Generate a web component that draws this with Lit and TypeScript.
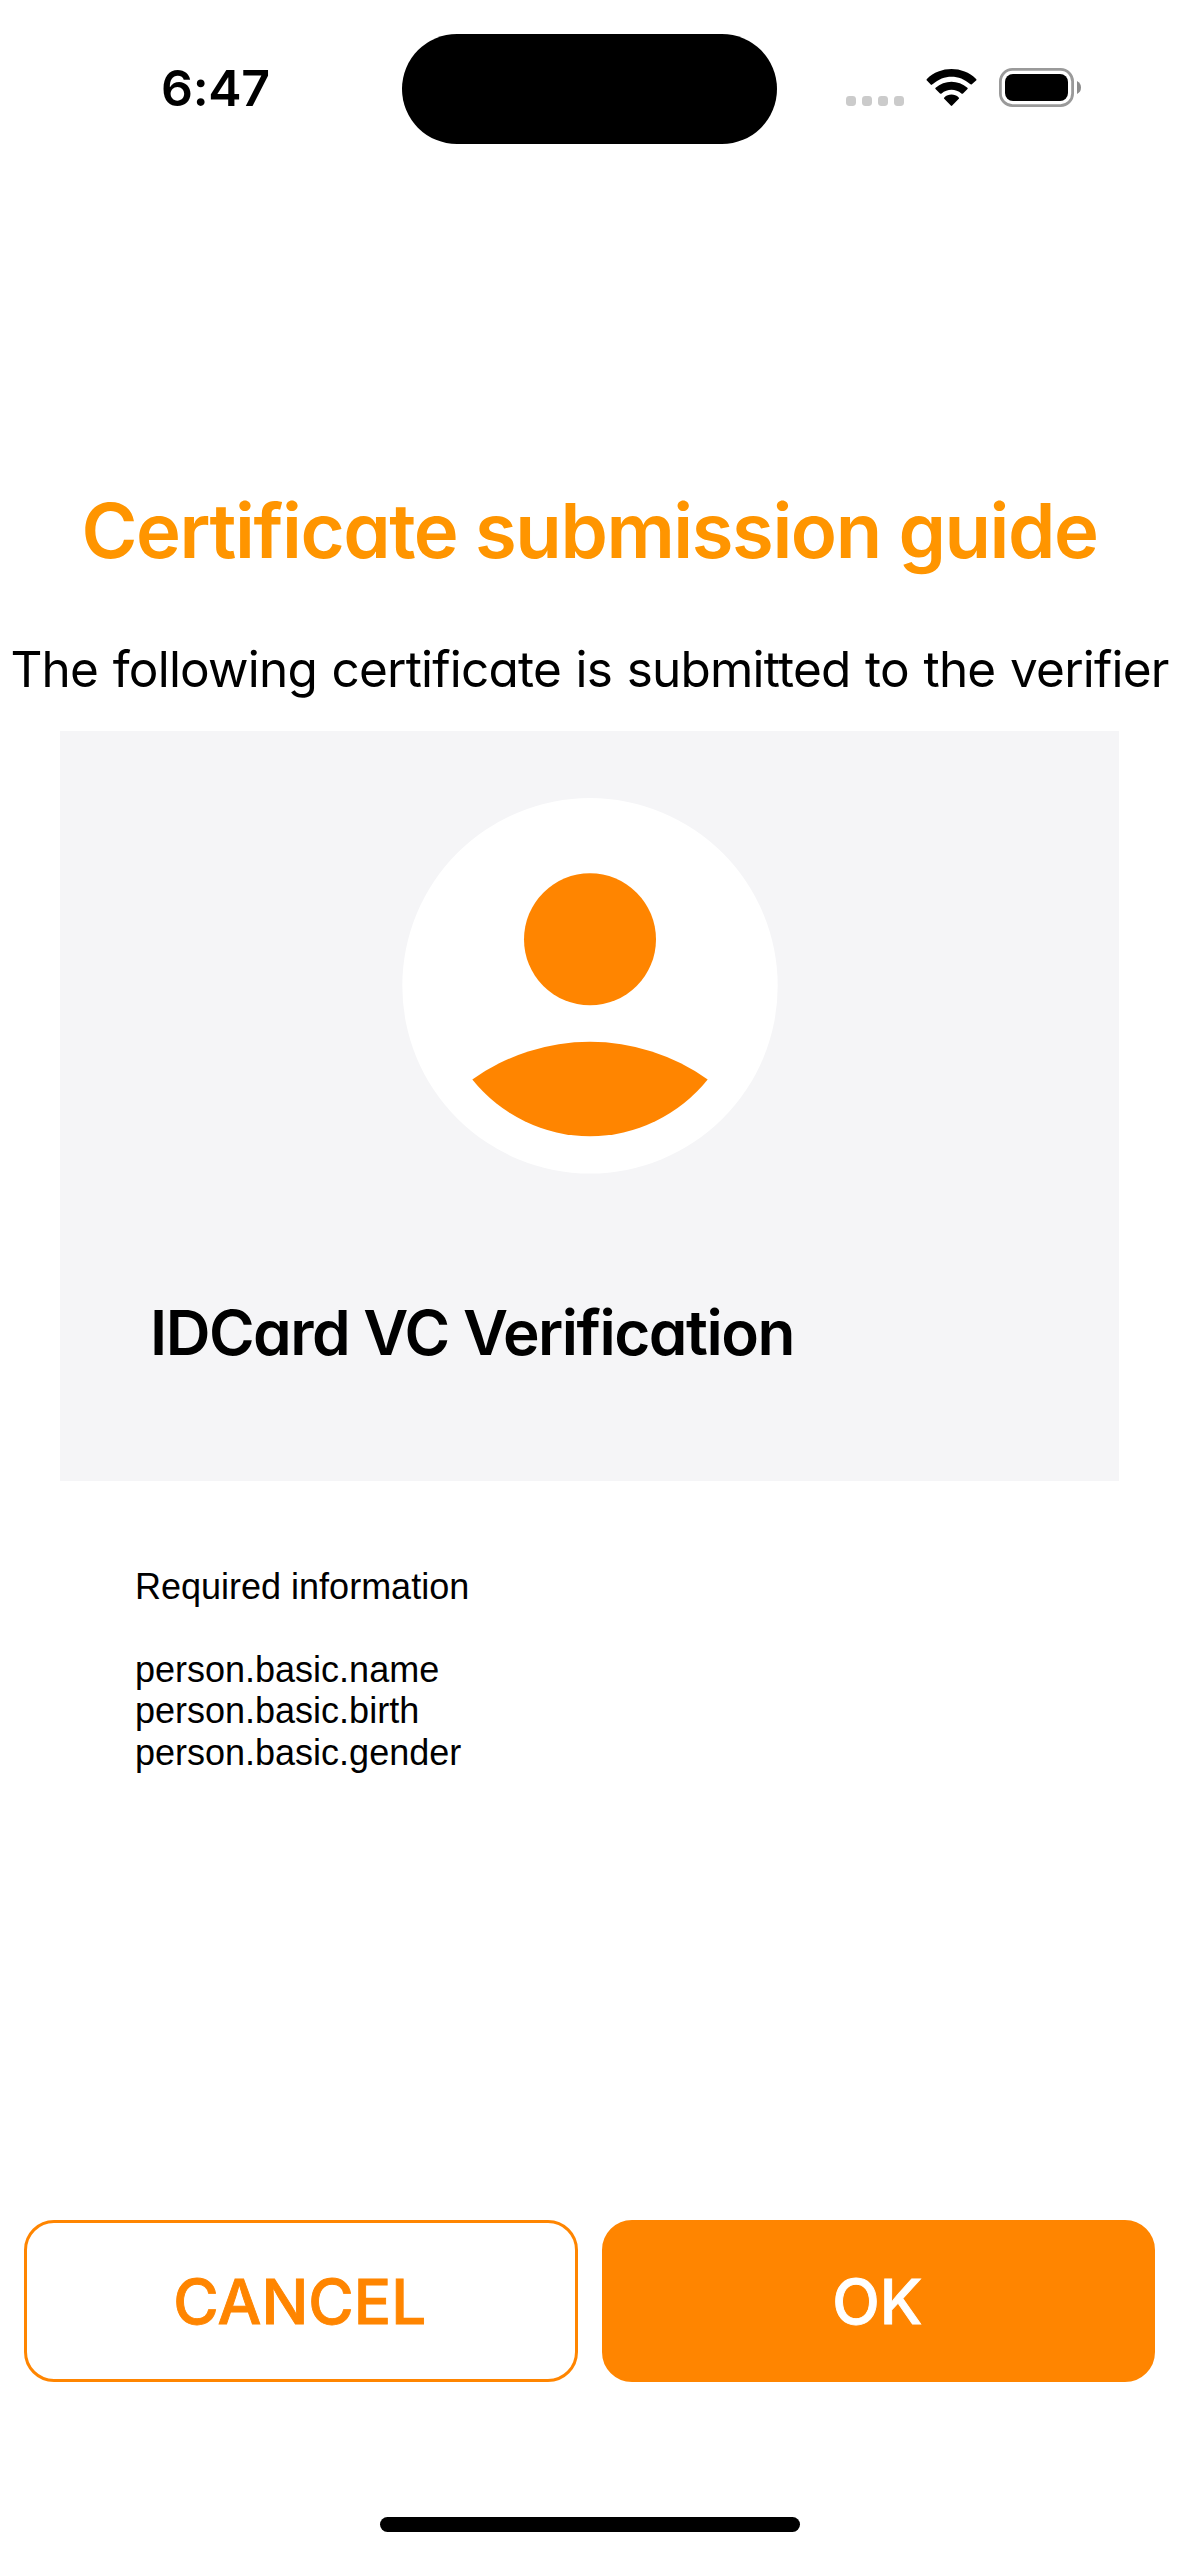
import { LitElement, html, svg, css } from "lit";
import { customElement, property } from "lit/decorators.js";

@customElement("status-bar")
class StatusBar extends LitElement {
  static styles = css`
    :host { display: block; }
    .bar { display: grid; grid-template-columns: 402px 375px 1fr; height: 110px; padding-top: 34px; }
    .time { padding: 24px 0 0 161px; font: 600 50px/60px Inter, sans-serif; letter-spacing: -0.3px; color: #000; }
    .island { background: #000; border-radius: 55px; }
    .icons { padding-left: 69px; padding-top: 34px; }
    svg { display: block; }
  `;
  render() {
    return html`<div class="bar">
      <div class="time">6:47</div>
      <div class="island"></div>
      <div class="icons">
        <svg width="236" height="40" viewBox="846 68 236 40">
          <g fill="#cbcbcb">
            ${[846, 862, 878, 894].map((x) => svg`<rect x=${x} y="96" width="10" height="10" rx="3.4"/>`)}
          </g>
          <path d="M931.2 84.9L926.9 80.6Q926.1 79.7 926.9 78.9C940.4 65.8 962.6 65.8 976.1 78.9Q976.9 79.7 976.1 80.6L971.8 84.2Q971 84.9 970.1 84.1C959.5 74.2 943.5 74.2 932.9 84.1Q932 84.9 931.2 84.9Z"/>
          <path d="M940 93.6L935.5 89.1Q934.9 88.4 935.6 87.7C944.5 79.6 958.5 79.6 967.4 87.7Q968.1 88.4 967.5 89.1L963 93.4Q962.2 94 961.4 93.4C955.7 88.5 947.3 88.5 941.6 93.4Q940.8 94 940 93.6Z"/>
          <path d="M950.8 105.6L944.2 98.8Q943.5 98.1 944.3 97.4C948.4 93.6 954.6 93.6 958.7 97.4Q959.5 98.1 958.8 98.8L952.2 105.6Q951.5 106.2 950.8 105.6Z"/>
          <rect x="1000.4" y="69.4" width="72.2" height="36.2" rx="12" fill="none" stroke="#9a9a9a" stroke-width="2.8"/>
          <rect x="1005" y="74" width="63" height="27" rx="8"/>
          <path d="M1077 81Q1081 83 1081 87.5Q1081 92 1077 94Z" fill="#8c8c8c"/>
        </svg>
      </div>
    </div>`;
  }
}

@customElement("certificate-card")
class CertificateCard extends LitElement {
  @property() name = "";
  static styles = css`
    :host { display: block; }
    .card { box-sizing: border-box; height: 750px; margin: 0 60px; padding-top: 67px; background: #f5f5f7; display: flex; flex-direction: column; }
    svg { display: block; align-self: center; }
    .name { padding: 123px 0 0 90px; font: 600 62px/72px Inter, sans-serif; font-feature-settings: "cv11"; letter-spacing: -1.5px; color: #000; white-space: nowrap; }
  `;
  render() {
    return html`<div class="card">
      <svg width="376" height="376" viewBox="0 0 376 376">
        <circle cx="188" cy="187.8" r="187.7" fill="#fff"/>
        <circle cx="188" cy="141.3" r="66" fill="#ff8500"/>
        <path d="M70.3 281.5A202.6 202.6 0 0 1 305.7 281.5A150.5 150.5 0 0 1 70.3 281.5Z" fill="#ff8500"/>
      </svg>
      <div class="name">${this.name}</div>
    </div>`;
  }
}

@customElement("app-root")
class AppRoot extends LitElement {
  static styles = css`
    :host { display: block; }
    .screen { display: flex; flex-direction: column; height: 2556px; width: 1179px; background: #fff; overflow: hidden; color: #000; }
    h1 { margin: 340px 0 0; text-align: center; white-space: nowrap; font: 600 76px/92px Inter, sans-serif; font-feature-settings: "cv11"; letter-spacing: -1.45px; color: #ff9500; }
    .lead { margin: 63px 0 0; height: 60px; display: flex; justify-content: center; white-space: nowrap; font: 400 49.5px/60px Inter, sans-serif; font-feature-settings: "cv11"; letter-spacing: -0.8px; word-spacing: 1.5px; }
    certificate-card { margin-top: 32px; }
    .info { margin: 85px 0 0 135px; font: 36px/41.4px "Liberation Sans", Arial, sans-serif; }
    .info p { margin: 0 0 41.4px; }
    .info ul { margin: 0; padding: 0; list-style: none; }
    .actions { margin-top: auto; padding: 0 24px; display: grid; grid-template-columns: 1fr 1fr; gap: 24px; }
    button { box-sizing: border-box; height: 162px; border: 3px solid #ff8500; border-radius: 30px; padding: 1px 2px 0 0; font: 500 62px/74px Inter, sans-serif; letter-spacing: 0; -webkit-text-stroke: 0.9px currentColor; color: #ff8500; background: #fff; }
    .ok { background: #ff8500; color: #fff; }
    .home { width: 420px; height: 15px; border-radius: 8px; background: #000; margin: 135px auto 24px; flex: none; }
  `;
  private claims = ["person.basic.name", "person.basic.birth", "person.basic.gender"];
  render() {
    return html`<main class="screen">
      <status-bar></status-bar>
      <h1>Certificate submission guide</h1>
      <div class="lead">The following certificate is submitted to the verifier</div>
      <certificate-card name="IDCard VC Verification"></certificate-card>
      <section class="info">
        <p>Required information</p>
        <ul>${this.claims.map((c) => html`<li>${c}</li>`)}</ul>
      </section>
      <div class="actions">
        <button class="cancel">CANCEL</button>
        <button class="ok">OK</button>
      </div>
      <div class="home"></div>
    </main>`;
  }
}
